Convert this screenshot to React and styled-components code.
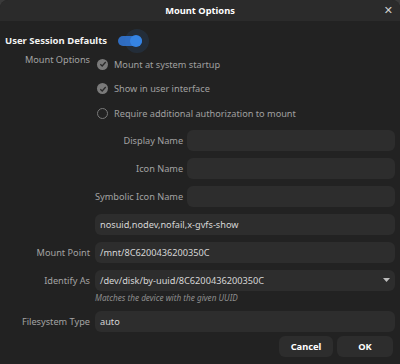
import React from 'react';
import styled, { createGlobalStyle } from 'styled-components';

const GlobalStyle = createGlobalStyle`
  html, body {
    margin: 0;
    padding: 0;
    background: #3a3a3a;
  }
  body {
    font-family: "Noto Sans", "DejaVu Sans", sans-serif;
  }
`;

const Window = styled.div`
  width: 400px;
  height: 364px;
  display: flex;
  flex-direction: column;
  background: #222222;
  border-radius: 8px 8px 0 0;
  overflow: hidden;
`;

const Header = styled.div`
  height: 21px;
  flex: none;
  display: flex;
  align-items: center;
  justify-content: center;
  position: relative;
  background: #2b2b2b;
  color: #ffffff;
  font-size: 9.3px;
  font-weight: 700;
`;

const Close = styled.span`
  position: absolute;
  right: 7px;
  top: 4px;
  font-size: 11px;
  color: #d0d0d0;
  line-height: 12px;
`;

const Body = styled.div`
  flex: 1;
  display: flex;
  flex-direction: column;
  padding: 0 5px 7px 5px;
`;

const SessionRow = styled.div`
  display: flex;
  align-items: center;
  gap: 11px;
  height: 31px;
  margin-top: 4px;
  font-size: 9.5px;
  font-weight: 700;
  color: #f2f2f2;
`;

const Switch = styled.div`
  width: 24px;
  height: 10px;
  border-radius: 5px;
  background: #2f6cc0;
  position: relative;

  &::before {
    content: '';
    position: absolute;
    right: -7px;
    top: -7px;
    width: 24px;
    height: 24px;
    border-radius: 50%;
    background: rgba(53, 132, 228, 0.12);
  }

  &::after {
    content: '';
    position: absolute;
    right: 0;
    top: -1px;
    width: 12px;
    height: 12px;
    border-radius: 50%;
    background: #3584e4;
  }
`;

const Form = styled.div`
  display: grid;
  grid-template-columns: 85px 1fr;
  column-gap: 5px;
  row-gap: 7px;
  font-size: 9.2px;
`;

const Label = styled.div`
  color: #a2a2a2;
  text-align: right;
  line-height: ${p => (p.$top ? '12px' : '21px')};
  margin-top: ${p => (p.$top ? '-2px' : '0')};
  white-space: nowrap;
`;

const Checks = styled.div`
  display: flex;
  flex-direction: column;
  margin-top: -4px;
  margin-bottom: -3px;
`;

const CheckRow = styled.div`
  height: 24.5px;
  display: flex;
  align-items: center;
  gap: 6px;
  padding-left: 2px;
  color: #a0a0a0;
`;

const Circle = styled.span`
  width: 11px;
  height: 11px;
  border-radius: 50%;
  box-sizing: border-box;
  display: flex;
  align-items: center;
  justify-content: center;
  background: ${p => (p.$checked ? '#7a7a7a' : 'transparent')};
  border: ${p => (p.$checked ? 'none' : '1.3px solid #7a7a7a')};
`;

const Names = styled.div`
  display: grid;
  grid-template-columns: auto 1fr;
  column-gap: 4px;
  row-gap: 7px;
`;

const Entry = styled.div`
  height: 21px;
  border-radius: 6px;
  background: #2d2d2d;
  color: #d6d6d6;
  padding: 0 5px;
  display: flex;
  align-items: center;
  justify-content: space-between;
  white-space: nowrap;
`;

const Stack = styled.div`
  display: flex;
  flex-direction: column;
`;

const Hint = styled.div`
  line-height: 12px;
  margin-top: 1px;
  font-size: 8.2px;
  font-style: italic;
  color: #8e8e8e;
`;

const Buttons = styled.div`
  display: flex;
  justify-content: flex-end;
  gap: 4px;
  margin-top: 4px;
  margin-right: 2px;
`;

const Button = styled.div`
  height: 21px;
  width: ${p => p.$w}px;
  border-radius: 6px;
  background: #2d2d2d;
  color: #ffffff;
  font-size: 9.3px;
  font-weight: 700;
  display: flex;
  align-items: center;
  justify-content: center;
`;

function Check({ checked, children }) {
  return (
    <CheckRow>
      <Circle $checked={checked}>
        {checked && (
          <svg width="8" height="8" viewBox="0 0 8 8">
            <path d="M1.3 4.2 L3.2 6 L6.7 2" fill="none" stroke="#2a2a2a" strokeWidth="1.3" />
          </svg>
        )}
      </Circle>
      {children}
    </CheckRow>
  );
}

export default function App() {
  return (
    <>
      <GlobalStyle />
      <Window>
        <Header>
          Mount Options
          <Close>✕</Close>
        </Header>
        <Body>
          <SessionRow>
            User Session Defaults
            <Switch />
          </SessionRow>
          <Form>
            <Label $top>Mount Options</Label>
            <Checks>
              <Check checked>Mount at system startup</Check>
              <Check checked>Show in user interface</Check>
              <Check>Require additional authorization to mount</Check>
            </Checks>

            <div />
            <Names>
              <Label>Display Name</Label>
              <Entry />
              <Label>Icon Name</Label>
              <Entry />
              <Label>Symbolic Icon Name</Label>
              <Entry />
            </Names>

            <div />
            <Entry>nosuid,nodev,nofail,x-gvfs-show</Entry>

            <Label>Mount Point</Label>
            <Entry>/mnt/8C6200436200350C</Entry>

            <Label>Identify As</Label>
            <Stack>
              <Entry>
                /dev/disk/by-uuid/8C6200436200350C
                <svg width="7" height="4" viewBox="0 0 7 4">
                  <path d="M0 0 H7 L3.5 4 Z" fill="#bdbdbd" />
                </svg>
              </Entry>
              <Hint>Matches the device with the given UUID</Hint>
            </Stack>

            <Label>Filesystem Type</Label>
            <Entry>auto</Entry>
          </Form>
          <Buttons>
            <Button $w={54}>Cancel</Button>
            <Button $w={56}>OK</Button>
          </Buttons>
        </Body>
      </Window>
    </>
  );
}
